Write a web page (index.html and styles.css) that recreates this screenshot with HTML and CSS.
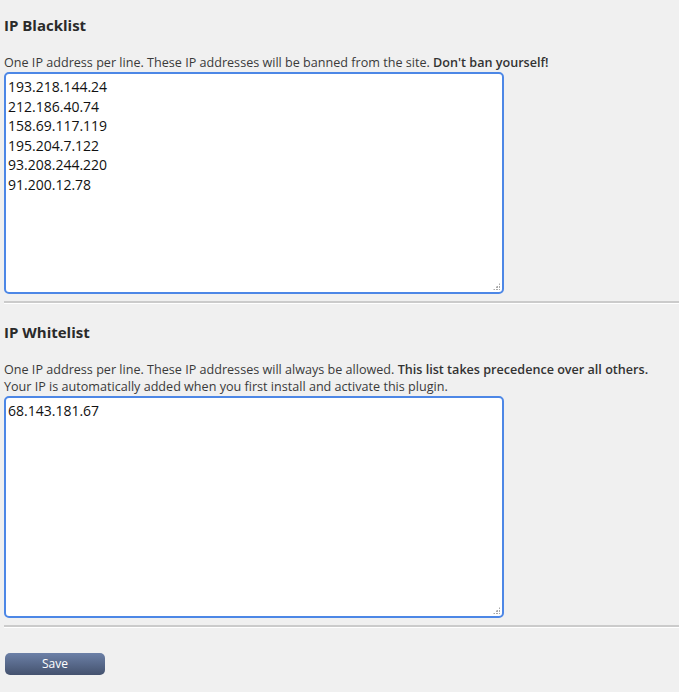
FILE: index.html
```
<!DOCTYPE html>
<html>
<head>
<meta charset="utf-8">
<link rel="stylesheet" href="styles.css">
</head>
<body>
<div class="page">
  <section class="block first">
    <h3 class="title">IP Blacklist</h3>
    <p class="desc">One IP address per line. These IP addresses will be banned from the site. <strong>Don't ban yourself!</strong></p>
    <div class="field">
      <textarea class="iplist">193.218.144.24
212.186.40.74
158.69.117.119
195.204.7.122
93.208.244.220
91.200.12.78</textarea>
      <span class="grip"></span>
    </div>
  </section>
  <hr class="rule">
  <section class="block">
    <h3 class="title">IP Whitelist</h3>
    <p class="desc">One IP address per line. These IP addresses will always be allowed. <strong>This list takes precedence over all others.</strong><br>Your IP is automatically added when you first install and activate this plugin.</p>
    <div class="field">
      <textarea class="iplist">68.143.181.67</textarea>
      <span class="grip"></span>
    </div>
  </section>
  <hr class="rule">
  <div class="actions">
    <button class="save" type="button">Save</button>
  </div>
</div>
</body>
</html>
```
FILE: styles.css
```
html, body {
  margin: 0;
  padding: 0;
  background: #f0f0f0;
}
body {
  font-family: "Open Sans", "Noto Sans", sans-serif;
  color: #333333;
  width: 679px;
  height: 692px;
  overflow: hidden;
}
.page {
  padding-left: 4px;
}
.block {
  display: flex;
  flex-direction: column;
  align-items: flex-start;
}
.title {
  margin: 18px 0 0;
  font-size: 15px;
  line-height: 20px;
  font-weight: bold;
  color: #2a2a2a;
}
.first .title {
  margin-top: 15px;
}
.desc {
  margin: 19px 0 1px;
  font-size: 12.6px;
  line-height: 17px;
  color: #3a3a3a;
}
.desc strong {
  font-weight: 600;
  color: #333;
}
.field {
  position: relative;
  width: 500px;
  height: 222px;
}
.iplist {
  display: block;
  box-sizing: border-box;
  width: 500px;
  height: 222px;
  margin: 0;
  padding: 3px 2px 2px;
  border: 2px solid #4d87e6;
  border-radius: 5px;
  background: #ffffff;
  font-family: "Open Sans", "Noto Sans", sans-serif;
  font-size: 14px;
  line-height: 19.6px;
  color: #111111;
  outline: none;
  resize: none;
}
.grip {
  position: absolute;
  right: 4px;
  bottom: 4px;
  width: 7px;
  height: 7px;
  background:
    radial-gradient(circle at 1px 1px, #a9a9a9 0.8px, transparent 1.1px) 0 0 / 3px 3px;
  clip-path: polygon(100% 0, 100% 100%, 0 100%);
}
.rule {
  margin: 7px 0 0;
  height: 0;
  border: 0;
  border-top: 2px solid #cbcbcb;
  border-bottom: 1px solid #ffffff;
}
.actions {
  padding-top: 23px;
  padding-left: 1px;
}
.save {
  width: 100px;
  height: 22px;
  border: 0;
  border-radius: 5px;
  background: linear-gradient(#6c80a7, #44526e);
  color: #ffffff;
  font-family: "Open Sans", "Noto Sans", sans-serif;
  font-size: 12px;
  padding: 0;
  line-height: 22px;
}
```
